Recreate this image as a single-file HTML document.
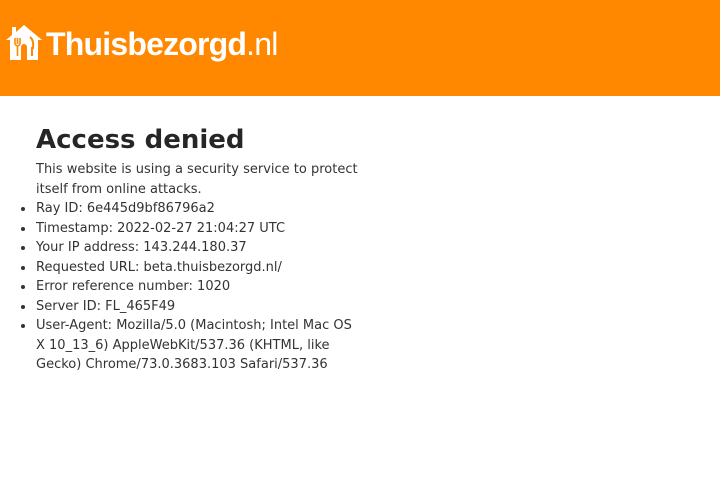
<!DOCTYPE html>
<html><head><meta charset="utf-8"><style>
html,body{margin:0;padding:0;background:#fff;}
body{width:720px;height:480px;overflow:hidden;font-family:"DejaVu Sans",sans-serif;color:#333;}
.hdr{height:96px;background:#ff8800;position:relative;}
.logo{position:absolute;left:46px;top:26px;color:#fff;font-family:"Liberation Sans",sans-serif;font-size:32px;white-space:nowrap;letter-spacing:-0.8px;}
.logo b{font-weight:bold}
.icon{position:absolute;left:5px;top:24px;}
.main{position:absolute;left:36px;top:122px;width:325px;}
h1{margin:0;font-size:26px;color:#262626;font-weight:bold;line-height:36px;}
p{margin:2px 0 0;font-size:13px;line-height:19.5px;}
ul{margin:0;padding:0 0 0 0;list-style:none;font-size:13px;line-height:19.5px;}
li{position:relative;}
li:before{content:"";position:absolute;left:-15px;top:8px;width:4px;height:4px;border-radius:50%;background:#333;}
</style></head><body>
<div class="hdr">
<svg class="icon" width="38" height="37" viewBox="0 0 38 37">
<path d="M19 1 L37 16 L33 16 L33 36 L22 36 L22 24 Q22 20 19 20 Q16 20 16 24 L16 36 L5 36 L5 16 L1 16 L7 11 L7 3 L11 3 L11 8 Z" fill="#fff"/>
<path d="M10 14 L10 20 M12.5 14 L12.5 20 M15 14 L15 20 M10 20 Q12.5 24 15 20 M12.5 22 L12.5 32" stroke="#ff8800" stroke-width="1.6" fill="none"/>
<path d="M25 13 Q29 16 28 24 L27 24 L27 32" stroke="#ff8800" stroke-width="2" fill="none"/>
</svg>
<div class="logo"><b>Thuisbezorgd</b>.nl</div>
</div>
<div class="main">
<h1>Access denied</h1>
<p>This website is using a security service to protect itself from online attacks.</p>
<ul>
<li>Ray ID: 6e445d9bf86796a2</li>
<li>Timestamp: 2022-02-27 21:04:27 UTC</li>
<li>Your IP address: 143.244.180.37</li>
<li>Requested URL: beta.thuisbezorgd.nl/</li>
<li>Error reference number: 1020</li>
<li>Server ID: FL_465F49</li>
<li>User-Agent: Mozilla/5.0 (Macintosh; Intel Mac OS X 10_13_6) AppleWebKit/537.36 (KHTML, like Gecko) Chrome/73.0.3683.103 Safari/537.36</li>
</ul>
</div>
</body></html>
